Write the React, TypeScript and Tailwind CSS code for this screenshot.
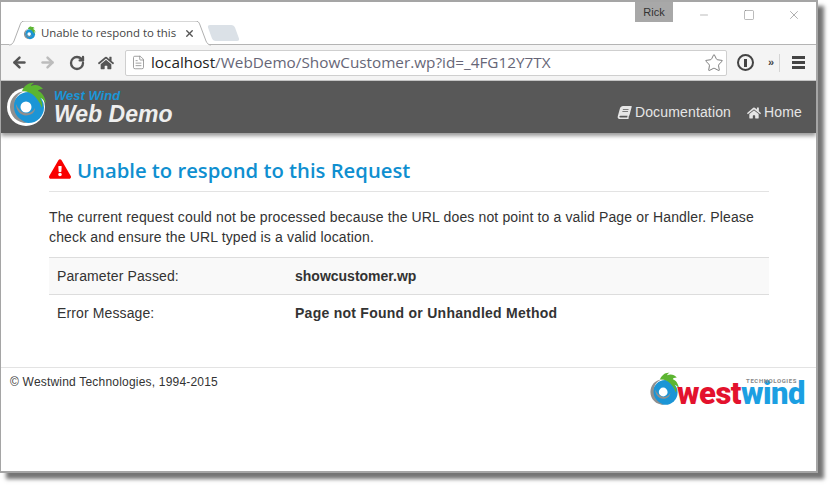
import { Star, FileText, ArrowLeft, ArrowRight, RotateCw, X, Minus, Square } from "lucide-react";
import { FaBook, FaHome, FaExclamationTriangle } from "react-icons/fa";

function PalmLogo({ width, className }: { width: number; className?: string }) {
  return (
    <svg width={width} height={width * 1.1} viewBox="0 0 40 44" className={className}>
      <circle cx="19" cy="25" r="19" fill="#ffffff" />
      <circle cx="21.5" cy="25.5" r="15.5" fill="#1b95d6" />
      <path d="M18 9 C8 10 3 17 3 25 C3 34 10 41 20 41 C13 38 7 33 7 25 C7 17 11 11 18 9 Z" fill="#8f8f8f" />
      <circle cx="19" cy="25" r="5.5" fill="#ffffff" />
      <path d="M9 22 C9 30 15 35 22 33 C26 32 28 29 28 26 C26 30 22 32 18 31 C14 30 11 27 9 22 Z" fill="#8f8f8f" />
      <path d="M15 9 C17 4 22 0 27 1 C25 2 24 3 24 4 C28 2 33 3 36 7 C33 7 31 8 31 9 C35 10 38 15 39 21 C36 17 34 16 33 16 C35 19 36 23 35 26 C33 20 29 15 25 12 C22 10 18 9 15 9 Z" fill="#5cb531" />
    </svg>
  );
}

export default function App() {
  return (
    <div className="h-[489px] w-[833px] overflow-hidden bg-white font-['Liberation_Sans',sans-serif]">
      <div className="flex h-[473px] w-[818px] flex-col overflow-hidden border-t-2 border-r-2 border-b-2 border-l border-[#a5a5a5] bg-white shadow-[6px_6px_4px_rgba(70,70,70,0.75)]">
        {/* title bar and tabs */}
        <div className="relative flex h-[43px] shrink-0 items-end border-b border-[#b4b4b4] pl-[8px]">
          <div className="relative -mb-px flex h-[24px] w-[200px] items-center bg-white pl-[14px]">
            <svg width="202" height="25" viewBox="0 0 202 25" className="absolute top-0 left-0" fill="none">
              <path d="M0 24 C3 24 4 22 5 20 L11 4 C12 1 13 0 16 0 L186 0 C189 0 190 1 191 4 L197 20 C198 22 199 24 202 24" stroke="#b0b0b0" fill="#ffffff" />
            </svg>
            <PalmLogo width={13} className="relative" />
            <span className="relative ml-[5px] w-[137px] overflow-hidden font-['Open_Sans',sans-serif] text-[11.4px] whitespace-nowrap text-[#444]">Unable to respond to this</span>
            <X size={11} strokeWidth={3} className="relative ml-[6px] text-[#555]" />
          </div>
          <div className="mb-[3px] ml-[1px] h-[16px] w-[27px] skew-x-[20deg] rounded-[3px] bg-[#dbe1e7]" />
          <div className="absolute top-0 right-0 flex h-[20px] items-start">
            <div className="mr-[8px] flex h-[20px] w-[38px] items-center justify-center bg-[#a8a8a8] text-[11px] text-[#333]">Rick</div>
            <div className="flex w-[45px] justify-center pt-[7px]"><Minus size={12} strokeWidth={1} className="text-[#777]" /></div>
            <div className="flex w-[45px] justify-center pt-[7px]"><Square size={12} strokeWidth={1} className="text-[#777]" /></div>
            <div className="flex w-[45px] justify-center pt-[6px]"><X size={14} strokeWidth={1} className="text-[#777]" /></div>
          </div>
        </div>

        {/* toolbar */}
        <div className="flex h-[36px] shrink-0 items-center border-b border-[#c8c8c8] bg-[#f4f4f4]">
          <ArrowLeft size={17} strokeWidth={3.5} className="ml-[10px] text-[#555]" />
          <ArrowRight size={17} strokeWidth={3.5} className="ml-[11px] text-[#bcbcbc]" />
          <RotateCw size={16} strokeWidth={3.5} className="ml-[13px] text-[#555]" />
          <FaHome size={16} className="ml-[13px] text-[#555]" />
          <div className="ml-[11px] flex h-[26px] w-[602px] items-center rounded-[2px] border border-[#cfcfcf] bg-white pl-[5px]">
            <FileText size={15} strokeWidth={1.25} className="text-[#888]" />
            <span className="ml-[5px] font-['Open_Sans',sans-serif] text-[15.3px] whitespace-nowrap text-[#667]">
              <span className="text-[#222]">localhost</span>/WebDemo/ShowCustomer.wp?id=_4FG12Y7TX
            </span>
            <Star size={20} strokeWidth={1} className="mr-[2px] ml-auto text-[#666]" />
          </div>
          <div className="ml-[10px] flex h-[17px] w-[17px] items-center justify-center rounded-full border-[2.5px] border-[#444]">
            <div className="h-[8px] w-[3px] bg-[#444]" />
          </div>
          <span className="ml-[14px] text-[11px] font-bold text-[#444]">»</span>
          <div className="ml-[5px] h-[18px] w-px bg-[#d5d5d5]" />
          <div className="ml-[12px] flex w-[13px] flex-col gap-[2px]">
            <div className="h-[3px] bg-[#444]" />
            <div className="h-[3px] bg-[#444]" />
            <div className="h-[3px] bg-[#444]" />
          </div>
        </div>

        {/* nav bar */}
        <div className="flex h-[52px] shrink-0 items-center bg-[#585858] pr-[14px] pl-[6px] shadow-[0_3px_4px_rgba(0,0,0,0.4)]">
          <PalmLogo width={40} className="-mt-[6px]" />
          <div className="ml-[7px] flex flex-col italic">
            <span className="text-[13px] leading-[13px] font-bold text-[#1b95d6]">West Wind</span>
            <span className="mt-[1px] text-[23px] leading-[23px] font-bold text-[#eeeeee]">Web Demo</span>
          </div>
          <div className="mt-[11px] ml-auto flex items-center text-[14px] text-[#e6e6e6]">
            <FaBook size={13} className="-skew-x-[15deg]" />
            <span className="ml-[4px] tracking-[0.15px]">Documentation</span>
            <FaHome size={14} className="ml-[16px]" />
            <span className="ml-[3px] tracking-[0.15px]">Home</span>
          </div>
        </div>

        {/* error content */}
        <div className="flex-1 pt-[24px] pr-[47px] pl-[48px]">
          <div className="flex h-[35px] items-start border-b border-[#e3e3e3]">
            <FaExclamationTriangle size={22} className="mt-[1px] text-[#f90000]" />
            <h1 className="ml-[6px] font-['Open_Sans',sans-serif] text-[20.25px] leading-[26px] font-semibold text-[#0f8fd0]">Unable to respond to this Request</h1>
          </div>
          <p className="mt-[15px] text-[14px] leading-[20px] tracking-[0.14px] text-[#333]">
            The current request could not be processed because the URL does not point to a valid Page or Handler. Please check and ensure the URL typed is a valid location.
          </p>
          <div className="mt-[10px] text-[14px] text-[#333]">
            <div className="flex h-[37px] items-center border-t border-[#dddddd] bg-[#f9f9f9] px-[8px]">
              <span className="w-[238px] tracking-[0.12px]">Parameter Passed:</span>
              <span className="font-bold">showcustomer.wp</span>
            </div>
            <div className="flex h-[37px] items-center border-t border-[#dddddd] px-[8px]">
              <span className="w-[238px] tracking-[0.12px]">Error Message:</span>
              <span className="font-bold tracking-[0.26px]">Page not Found or Unhandled Method</span>
            </div>
          </div>
        </div>

        {/* footer */}
        <div className="flex h-[104px] shrink-0 items-start justify-between border-t border-[#e3e3e3] pt-[7px] pr-[11px] pl-[9px]">
          <span className="text-[12px] leading-[15px] tracking-[0.2px] text-[#333]">© Westwind Technologies, 1994-2015</span>
          <div className="flex items-start">
            <PalmLogo width={32} className="-mt-[3px]" />
            <div className="relative -ml-[3px] pt-[8px] font-['Roboto',sans-serif] text-[31px] leading-[22px] font-black tracking-[-0.5px]">
              <span className="text-[#e3122d]">west</span>
              <span className="text-[#1b9fe2]">wind</span>
              <span className="absolute top-[3px] right-[8px] text-[6px] leading-[6px] font-bold tracking-[0.6px] text-[#888]">TECHNOLOGIES</span>
            </div>
          </div>
        </div>
      </div>
    </div>
  );
}
